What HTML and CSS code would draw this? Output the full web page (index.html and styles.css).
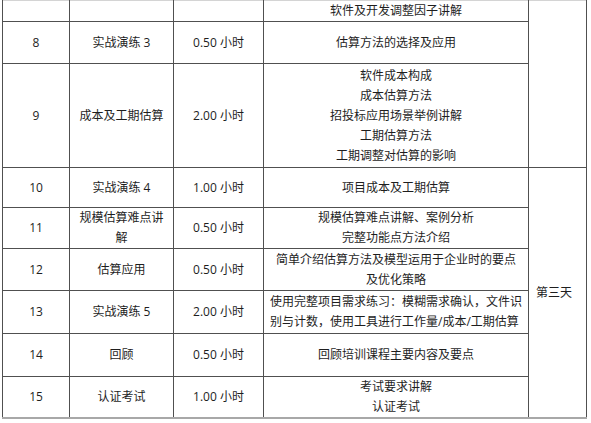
FILE: index.html
```html
<!DOCTYPE html>
<html lang="zh-CN">
<head>
<meta charset="utf-8">
<link rel="stylesheet" href="styles.css">
</head>
<body>
<div class="page">
<table class="schedule">
  <colgroup>
    <col class="c-no"><col class="c-name"><col class="c-time"><col class="c-desc"><col class="c-day">
  </colgroup>
  <tbody>
    <tr class="r21">
      <td></td><td></td><td></td>
      <td>软件及开发调整因子讲解</td>
      <td rowspan="3"></td>
    </tr>
    <tr class="r42">
      <td>8</td><td>实战演练 3</td><td>0.50 小时</td>
      <td>估算方法的选择及应用</td>
    </tr>
    <tr class="r104">
      <td>9</td><td>成本及工期估算</td><td>2.00 小时</td>
      <td>软件成本构成<br>成本估算方法<br>招投标应用场景举例讲解<br>工期估算方法<br>工期调整对估算的影响</td>
    </tr>
    <tr class="r40">
      <td>10</td><td>实战演练 4</td><td>1.00 小时</td>
      <td>项目成本及工期估算</td>
      <td rowspan="6" class="day">第三天</td>
    </tr>
    <tr class="r41">
      <td>11</td><td>规模估算难点讲<br>解</td><td>0.50 小时</td>
      <td>规模估算难点讲解、案例分析<br>完整功能点方法介绍</td>
    </tr>
    <tr class="r42">
      <td>12</td><td>估算应用</td><td>0.50 小时</td>
      <td>简单介绍估算方法及模型运用于企业时的要点<br>及优化策略</td>
    </tr>
    <tr class="r43">
      <td>13</td><td>实战演练 5</td><td>2.00 小时</td>
      <td class="left">使用完整项目需求练习：模糊需求确认，文件识<br>别与计数，使用工具进行工作量/成本/工期估算</td>
    </tr>
    <tr class="r43">
      <td>14</td><td>回顾</td><td>0.50 小时</td>
      <td>回顾培训课程主要内容及要点</td>
    </tr>
    <tr class="r41 last">
      <td>15</td><td>认证考试</td><td>1.00 小时</td>
      <td>考试要求讲解<br>认证考试</td>
    </tr>
  </tbody>
</table>
</div>
</body>
</html>
```
FILE: styles.css
```css
html, body {
  margin: 0;
  padding: 0;
  background: #ffffff;
}
.page {
  padding: 0 0 0 2px;
}
.schedule {
  border-collapse: collapse;
  table-layout: fixed;
  width: 585px;
  font-family: "Open Sans", "Noto Sans CJK SC", sans-serif;
  font-size: 12px;
  line-height: 20px;
  color: #1e1e1e;
  border-top: 1px solid #d4d4d4;
  border-bottom: 2px solid #a8a8a8;
}
.c-no { width: 67px; }
.c-name { width: 104px; }
.c-time { width: 90px; }
.c-desc { width: 265px; }
.c-day { width: 58px; }
.schedule td {
  border-left: 1px solid #505050;
  border-right: 1px solid #505050;
  border-bottom: 1px solid #505050;
  padding: 0 6px;
  text-align: center;
  vertical-align: middle;
  white-space: nowrap;
  overflow: hidden;
}
.schedule tr.last td {
  border-bottom: 2px solid #a8a8a8;
}
.schedule td.left { text-align: left; }
.schedule td.day {
  text-align: left;
  padding-left: 7px;
  border-bottom: 2px solid #a8a8a8;
}
.r21 { height: 21px; }
.r40 { height: 40px; }
.r41 { height: 41px; }
.r42 { height: 42px; }
.r43 { height: 43px; }
.r104 { height: 104px; }
```
